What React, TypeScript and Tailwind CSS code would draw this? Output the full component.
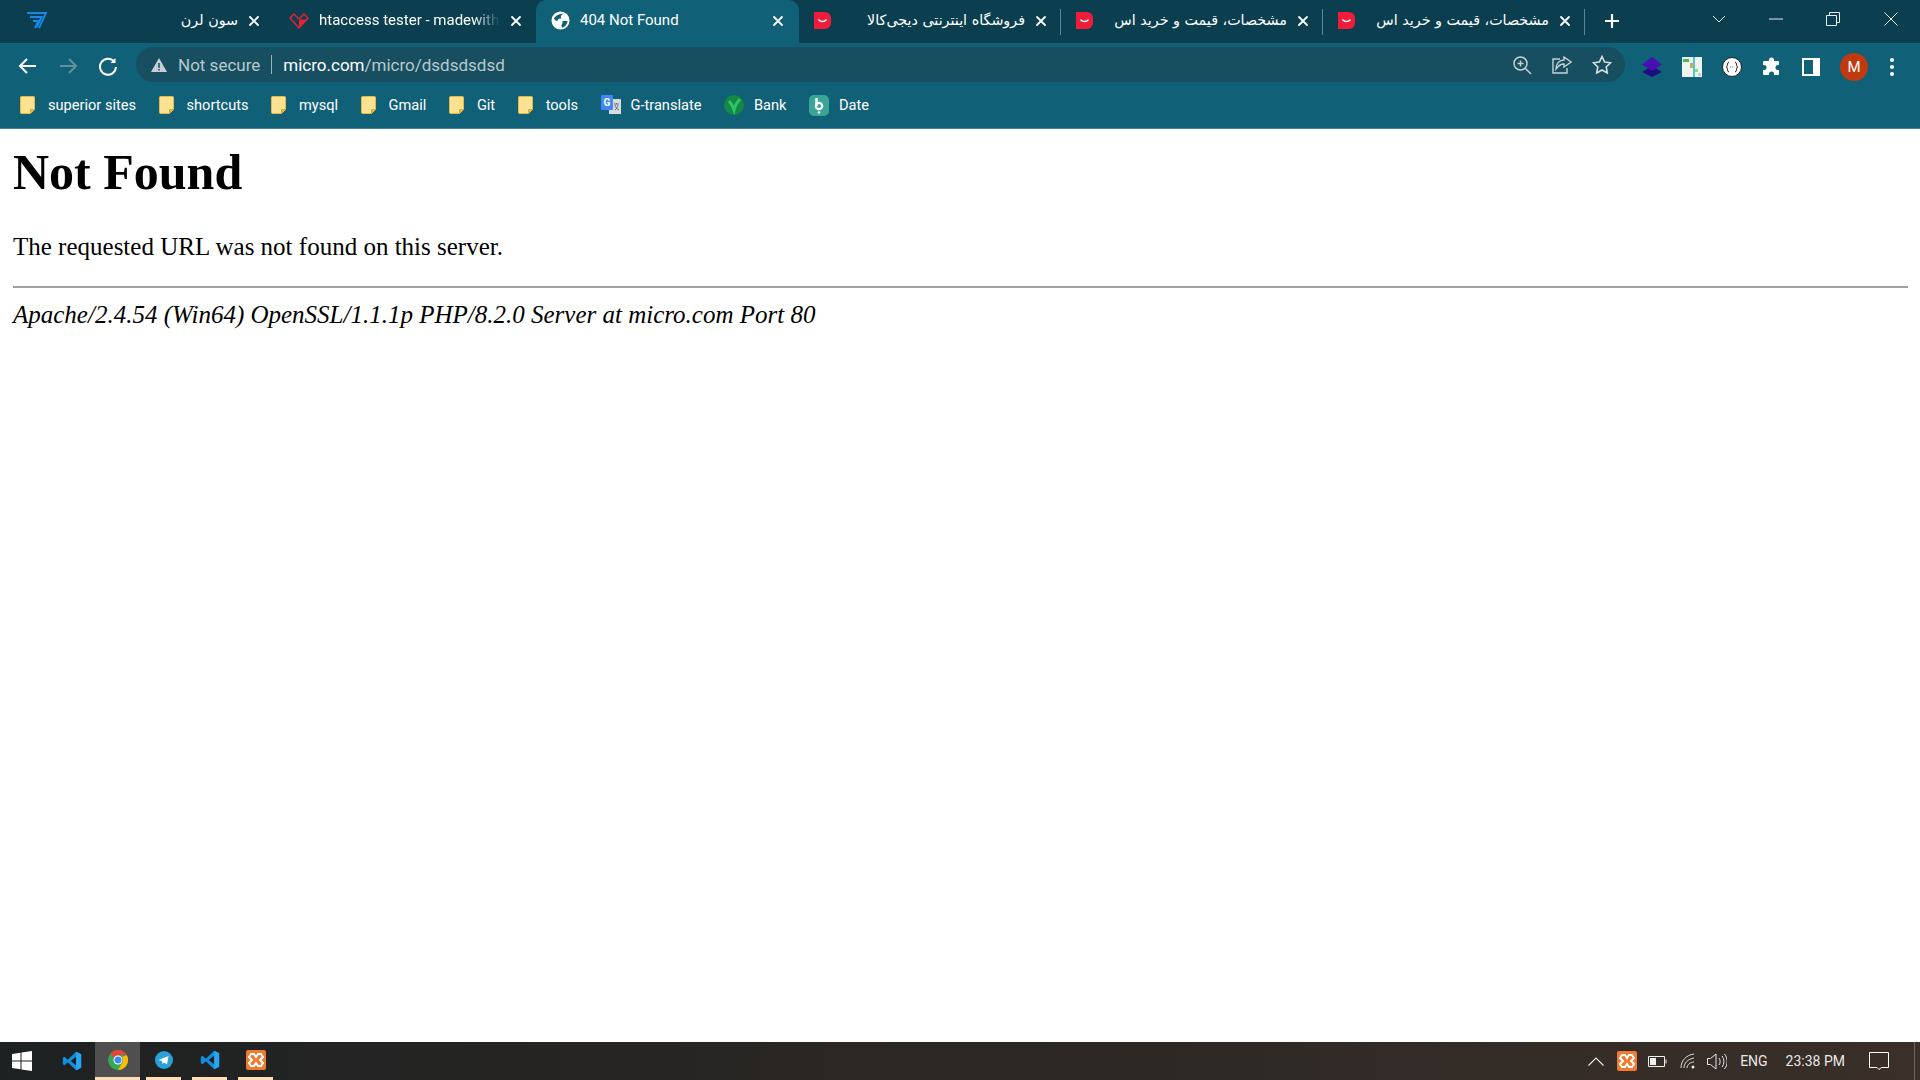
import { ReactNode } from 'react';

const uiFont = "font-['Roboto','DejaVu_Sans',sans-serif]";

const Close = () => (
    <svg width="12" height="12" viewBox="0 0 12 12" className="shrink-0" stroke="#fff" strokeWidth="1.8" strokeLinecap="round">
        <path d="M2 2l8 8M10 2l-8 8" />
    </svg>
);

const Digikala = () => (
    <svg width="17" height="17" viewBox="0 0 17 17" className="shrink-0">
        <path d="M0 0h11a6 6 0 0 1 6 6v5a6 6 0 0 1-6 6H0z" fill="#ef1c3b" />
        <path d="M5 8c1.5 2 5.500 2 7 0" stroke="#fff" strokeWidth="1.6" fill="none" strokeLinecap="round" />
    </svg>
);

const Wing = () => (
    <svg width="20" height="18" viewBox="0 0 20 18" className="shrink-0" fill="none" stroke="#1a86ea" strokeWidth="1.9">
        <path d="M0 1h19l-7 15" />
        <path d="M3 5h11.500l-5 10.500" />
        <path d="M6 9h5.500l-3.500 7" />
    </svg>
);

const HeartFav = () => (
    <svg width="20" height="16" viewBox="0 0 20 16" className="shrink-0">
        <path d="M1 5l4-4 5 5 5-5 4 4-9 10z" fill="none" stroke="#e3233a" strokeWidth="1.4" />
        <path d="M10 6.500h8.500L10 15z" fill="#f01c30" />
    </svg>
);

const Globe = () => (
    <svg width="19" height="19" viewBox="0 0 20 20" className="shrink-0">
        <circle cx="10" cy="10" r="9.500" fill="#fff" />
        <path d="M3 8Q6 3 13 2.500 9 5 11 8 7 7.500 6.500 10.500 4 10.500 3 8z" fill="#10607a" />
        <path d="M12 10.500h5.500Q17 15.500 12 17.500 10 15 12 13.500z" fill="#10607a" />
    </svg>
);

interface TabProps {
    icon: ReactNode;
    title: string;
    rtl?: boolean;
    active?: boolean;
    divider?: boolean;
    fade?: boolean;
}

const Tab = ({ icon, title, rtl, active, divider, fade }: TabProps) => (
    <div className={active ? 'flex h-[47px] w-[263px] shrink-0 items-center gap-[10px] rounded-t-[10px] bg-[#106077] pb-[6px] pl-[15px] pr-[15px]' : 'relative flex h-[43px] w-[262px] shrink-0 items-center gap-[10px] pb-[2px] pl-[15px] pr-[14px]'}>
        {icon}
        <span
            dir={rtl ? 'rtl' : 'ltr'}
            className={`min-w-0 flex-1 overflow-hidden whitespace-nowrap text-white ${rtl ? "text-right font-['DejaVu_Sans',sans-serif] text-[14.3px]" : 'text-[15px]'} ${fade ? '[mask-image:linear-gradient(to_right,#000_85%,transparent)]' : ''}`}
        >
            {title}
        </span>
        <Close />
        {divider && <div className="absolute right-0 top-[9px] h-[26px] w-px bg-[#5b8792]" />}
    </div>
);

const Folder = () => (
    <svg width="16" height="18" viewBox="0 0 16 18" className="mr-[2px] shrink-0">
        <path d="M0.500 1.500A1 1 0 0 1 1.500.5h12a1 1 0 0 1 1 1v12l-4 4h-9a1 1 0 0 1-1-1z" fill="#fde293" stroke="#e6b93f" />
        <path d="M14.500 13.500h-4v4" fill="#e0b74a" stroke="#d9a93a" />
    </svg>
);

const Mark = ({ text, icon }: { text: string; icon?: ReactNode }) => (
    <div className="flex items-center gap-[10px]">
        {icon ?? <Folder />}
        <span className="text-[14.6px] text-white">{text}</span>
    </div>
);

const VsCode = () => (
    <svg width="20" height="20" viewBox="0 0 24 24">
        <path d="M17 1l6 3v16l-6 3L7 13.500 3 17l-2-1v-8l2-1 4 3.500z" fill="#0f8fe0" />
        <path d="M17 6.500L10.500 12 17 17.500z" fill="#1e2122" />
        <path d="M17 1l6 3v16l-6 3z" fill="#2aa5f0" />
    </svg>
);

const Xampp = ({ size }: { size: number }) => (
    <svg width={size} height={size} viewBox="0 0 20 20">
        <rect width="20" height="20" rx="2" fill="#ef7a30" />
        <path d="M5 4h3l2 3 2-3h3l2 3-3 3 3 3-2 3h-3l-2-3-2 3H5l-2-3 3-3-3-3z" fill="none" stroke="#fff" strokeWidth="2" />
    </svg>
);

const App = () => {
    return (
        <div className={`flex h-[1080px] w-[1920px] flex-col overflow-hidden bg-white ${uiFont}`}>
            {/* tab strip */}
            <div className="h-[47px] shrink-0 bg-[#106077]">
                <div className="flex h-[43px] items-start bg-[#0b3f50] pl-[12px]">
                    <Tab icon={<Wing />} title="سون لرن" rtl />
                    <Tab icon={<HeartFav />} title="htaccess tester - madewithlove" fade />
                    <Tab icon={<Globe />} title="404 Not Found" active />
                    <Tab icon={<Digikala />} title="فروشگاه اینترنتی دیجی‌کالا" rtl divider />
                    <Tab icon={<Digikala />} title="مشخصات، قیمت و خرید اس" rtl divider />
                    <Tab icon={<Digikala />} title="مشخصات، قیمت و خرید اس" rtl divider />
                    <svg width="16" height="16" viewBox="0 0 16 16" className="ml-[19px] mt-[13px] shrink-0" stroke="#fff" strokeWidth="2.200">
                        <path d="M8 1v14M1 8h14" />
                    </svg>
                    <div className="ml-auto flex h-[38px] items-center text-[#e6eef0]">
                        <svg width="14" height="8" viewBox="0 0 14 8" fill="none" stroke="currentColor" className="mr-[43px]"><path d="M1 1l6 6 6-6" /></svg>
                        <svg width="14" height="2" viewBox="0 0 14 2" stroke="currentColor" className="mr-[43px]"><path d="M0 1h14" /></svg>
                        <svg width="14" height="14" viewBox="0 0 14 14" fill="none" stroke="currentColor" className="mr-[44px]"><path d="M.5 3.500h10v10H.5zM3.500 3.500v-3h10v10h-3" /></svg>
                        <svg width="14" height="14" viewBox="0 0 14 14" fill="none" stroke="currentColor" className="mr-[22px]"><path d="M.5.5l13 13M13.500.5l-13 13" /></svg>
                    </div>
                </div>
            </div>

            {/* toolbar */}
            <div className="flex h-[41px] shrink-0 items-start bg-[#106077]">
                <div className="flex w-[136px] items-center pl-[18px] pt-[9px]">
                    <svg width="20" height="18" viewBox="0 0 20 18" fill="none" stroke="#fff" strokeWidth="2"><path d="M18 9H3M9 2L2 9l7 7" /></svg>
                    <svg width="20" height="18" viewBox="0 0 20 18" fill="none" stroke="#5f929f" strokeWidth="2" className="ml-[20px]"><path d="M2 9h15M11 2l7 7-7 7" /></svg>
                    <svg width="20" height="20" viewBox="0 0 20 20" fill="none" stroke="#fff" strokeWidth="2" className="ml-[20px]"><path d="M16.500 6A8 8 0 1 0 18 11" /><path d="M17.500 2v5h-5z" fill="#fff" stroke="none" /></svg>
                </div>
                <div className="flex h-[35px] w-[1489px] items-center rounded-full bg-[#184f60] pl-[14px] pr-[13px] text-[17px]">
                    <svg width="18" height="16" viewBox="0 0 18 16"><path d="M9 1l8 14H1z" fill="#c5cfd3" /><path d="M9 6v5M9 12v1.500" stroke="#184f60" strokeWidth="1.500" /></svg>
                    <span className="ml-[10px] pt-[2px] text-[#b7c8ce]">Not secure</span>
                    <div className="ml-[11px] h-[19px] w-px bg-[#9cb3ba]" />
                    <span className="ml-[11px] pt-[2px] text-white">micro.com<span className="text-[#b7c8ce]">/micro/dsdsdsdsd</span></span>
                    <div className="ml-auto flex items-center gap-[20px]">
                        <svg width="20" height="20" viewBox="0 0 20 20" fill="none" stroke="#c5d0d4" strokeWidth="1.500"><circle cx="8.500" cy="8.500" r="6.500" /><path d="M13.500 13.500L19 19M8.500 5.500v6M5.500 8.500h6" /></svg>
                        <svg width="20" height="18" viewBox="0 0 20 18" fill="none" stroke="#c5d0d4" strokeWidth="1.400"><path d="M8 3H1v14h14v-5" /><path d="M12 1l7 5-7 5V8C8 8 6 10 4 13c0-5 3-9 8-9z" /></svg>
                        <svg width="20" height="19" viewBox="0 0 20 19" fill="none" stroke="#d5dee1" strokeWidth="1.600"><path d="M10 1.500l2.600 5.500 6 .8-4.400 4.200 1.100 6L10 15l-5.300 3 1.100-6L1.400 7.800l6-.8z" /></svg>
                    </div>
                </div>
                <div className="flex flex-1 items-center gap-[20px] pl-[17px] pt-[6px]">
                    <svg width="20" height="20" viewBox="0 0 20 20"><path d="M10 9l10 6-10 5-10-5z" fill="#1a0f80" /><path d="M10 0l10 7.500-10 6.500L0 7.500z" fill="#4a0fb0" /></svg>
                    <svg width="20" height="20" viewBox="0 0 20 20">
                        <rect width="20" height="20" fill="#eef4f0" />
                        <rect x="11" width="2" height="20" fill="#54c6d8" />
                        <rect x="1" y="2" width="6" height="3" fill="#4fb84f" />
                        <rect x="8" y="6" width="3" height="5" fill="#d4a84f" />
                        <rect x="13" y="12" width="3" height="3" fill="#8fd86f" />
                        <rect x="16" y="16" width="3" height="3" fill="#a9d8e0" />
                    </svg>
                    <svg width="20" height="20" viewBox="0 0 20 20">
                        <circle cx="10" cy="10" r="9.500" fill="#fff" stroke="#222" />
                        <path d="M7 5c-2 0-1 4-2.500 5C6 11 5 15 7 15M13 5c2 0 1 4 2.500 5C14 11 15 15 13 15" fill="none" stroke="#222" />
                        <path d="M8 10h4" stroke="#777" strokeDasharray="1 1" />
                    </svg>
                    <svg width="20" height="20" viewBox="0 0 20 20" fill="#fff"><path d="M7 3a2.500 2.500 0 0 1 5 0v1h4a1 1 0 0 1 1 1v3h-1a2.500 2.500 0 0 0 0 5h1v4a1 1 0 0 1-1 1h-4v-1a2.500 2.500 0 0 0-5 0v1H2a1 1 0 0 1-1-1v-4h1a2.500 2.500 0 0 0 0-5H1V5a1 1 0 0 1 1-1h5z" /></svg>
                    <svg width="18" height="18" viewBox="0 0 18 18"><rect width="18" height="18" fill="#fff" /><rect x="2" y="2" width="9" height="14" fill="#106077" /></svg>
                    <div className="flex h-[28px] w-[28px] items-center justify-center rounded-full bg-[#c0390f] text-[15px] text-white">M</div>
                    <svg width="8" height="20" viewBox="0 0 8 20" fill="#fff"><circle cx="4" cy="3" r="2" /><circle cx="4" cy="10" r="2" /><circle cx="4" cy="17" r="2" /></svg>
                </div>
            </div>

            {/* bookmarks */}
            <div className="flex h-[41px] shrink-0 items-center gap-[22.5px] border-b border-[#3f8296] bg-[#106077] pb-[5px] pl-[20px]">
                <Mark text="superior sites" />
                <Mark text="shortcuts" />
                <Mark text="mysql" />
                <Mark text="Gmail" />
                <Mark text="Git" />
                <Mark text="tools" />
                <Mark text="G-translate" icon={
                    <svg width="20" height="20" viewBox="0 0 20 20">
                        <path d="M8 4h11a1 1 0 0 1 1 1v14H8z" fill="#d5dbe0" />
                        <rect width="12" height="15" rx="1" fill="#4285f4" />
                        <text x="2.500" y="11" fontSize="10" fontWeight="700" fill="#fff" fontFamily="Roboto">G</text>
                        <path d="M13 9h5M15.500 8v1M14 10c1 3 2 4 4 5M17 10c-.5 2-1.500 4-3 5" stroke="#666" fill="none" strokeWidth=".9" />
                    </svg>
                } />
                <Mark text="Bank" icon={
                    <svg width="20" height="20" viewBox="0 0 20 20">
                        <circle cx="10" cy="10" r="10" fill="#128a45" />
                        <path d="M5 6c2 2 3.500 5 5 9 1-4 3-8 6-11" fill="none" stroke="#2fc463" strokeWidth="3" />
                    </svg>
                } />
                <Mark text="Date" icon={
                    <svg width="20" height="21" viewBox="0 0 20 21">
                        <rect width="20" height="21" rx="5" fill="#3aa596" />
                        <path d="M7.500 3v8" stroke="#fff" strokeWidth="2.500" />
                        <circle cx="10" cy="11" r="3.200" fill="none" stroke="#fff" strokeWidth="2.200" />
                        <circle cx="10" cy="17.500" r="1.300" fill="#fff" />
                    </svg>
                } />
            </div>

            {/* page */}
            <main className="min-h-0 flex-1 pl-[13px] pr-[12px] pt-[15px] font-['Liberation_Serif',serif] text-black">
                <h1 className="text-[50px] font-bold leading-[57px]">Not Found</h1>
                <p className="mt-[32px] text-[25px] leading-[28px]">The requested URL was not found on this server.</p>
                <hr className="mt-[25px] h-[2px] border-0 bg-[#a0a0a0]" />
                <address className="mt-[13px] text-[25px] italic leading-[28px]">Apache/2.4.54 (Win64) OpenSSL/1.1.1p PHP/8.2.0 Server at micro.com Port 80</address>
            </main>

            {/* taskbar */}
            <div className="flex h-[38px] shrink-0 items-center bg-gradient-to-r from-[#1e2122] via-[#2b2724] to-[#3a2f29] text-white">
                <div className="flex h-full w-[49px] items-center pl-[12px]">
                    <svg width="20" height="20" viewBox="0 0 20 20" fill="#fff"><path d="M0 3l8.500-1.200V9.500H0zM9.500 1.600L20 0v9.500H9.500zM0 10.500h8.500v7.700L0 17zM9.500 10.500H20V20L9.500 18.400z" /></svg>
                </div>
                <div className="flex h-full w-[46px] items-center justify-center"><VsCode /></div>
                <div className="flex h-full w-[45px] items-center justify-center border-b-[3px] border-[#ffdcb4] bg-[#4f4f4f]">
                    <svg width="20" height="20" viewBox="0 0 20 20">
                        <circle cx="10" cy="10" r="10" fill="#34a853" />
                        <path d="M10 0a10 10 0 0 1 8.700 5H10a5 5 0 0 0-4.600 3L2.500 3.500A10 10 0 0 1 10 0z" fill="#ea4335" />
                        <path d="M18.700 5A10 10 0 0 1 10 20l4.300-7.500A5 5 0 0 0 14 7z" fill="#fbbc05" />
                        <circle cx="10" cy="10" r="4.500" fill="#fff" />
                        <circle cx="10" cy="10" r="3.500" fill="#4285f4" />
                    </svg>
                </div>
                <div className="ml-[6px] flex h-full w-[35px] items-center justify-center border-b-[3px] border-[#ffdcb4]">
                    <svg width="18" height="18" viewBox="0 0 18 18">
                        <circle cx="9" cy="9" r="9" fill="#2b9fd8" />
                        <path d="M3.500 9l10-4-1.500 8.500-3-2-1.500 1.500-.5-3z" fill="#fff" />
                    </svg>
                </div>
                <div className="ml-[11px] flex h-full w-[35px] items-center justify-center border-b-[3px] border-[#ffdcb4]"><VsCode /></div>
                <div className="ml-[11px] flex h-full w-[35px] items-center justify-center border-b-[3px] border-[#ffdcb4]"><Xampp size={20} /></div>

                <div className="ml-auto flex h-full items-center text-[14px] text-[#e8e8e8]">
                    <svg width="16" height="9" viewBox="0 0 16 9" fill="none" stroke="#e8e8e8" strokeWidth="1.200"><path d="M.5 8.500L8 1l7.500 7.500" /></svg>
                    <div className="ml-[13px]"><Xampp size={20} /></div>
                    <svg width="19" height="11" viewBox="0 0 19 11" fill="none" stroke="#eee" className="ml-[11px]"><path d="M.5.5h16v10H.5z" /><path d="M18 3.500v4" /><rect x="2" y="2" width="6" height="7" fill="#eee" stroke="none" /></svg>
                    <svg width="16" height="16" viewBox="0 0 16 16" fill="none" stroke="#ddd" className="ml-[13px]"><path d="M1 15C1 8 6 2 14 1M4 15c0-5 4-9 10-10M7 15c0-3 3-6 7-6" /><circle cx="13" cy="14" r="1.500" fill="#eee" stroke="none" /></svg>
                    <svg width="20" height="17" viewBox="0 0 20 17" fill="none" stroke="#e8e8e8" className="ml-[11px]"><path d="M.5 5.500h3L9 1v15l-5.500-4.500h-3zM12 5c1.500 2 1.500 5 0 7M15 3c2.500 3 2.500 8 0 11M17.500 1c3.500 4 3.500 11 0 15" /></svg>
                    <span className="ml-[13px]">ENG</span>
                    <span className="ml-[18px]">23:38 PM</span>
                    <svg width="20" height="18" viewBox="0 0 20 18" fill="none" stroke="#fff" className="ml-[24px]"><path d="M.5.5h19v15h-7L10 17.500 8 15.500H.5z" /></svg>
                    <div className="ml-[25px] mr-[5px] h-full w-px bg-[#6b6560]" />
                </div>
            </div>
        </div>
    );
};

export default App;
